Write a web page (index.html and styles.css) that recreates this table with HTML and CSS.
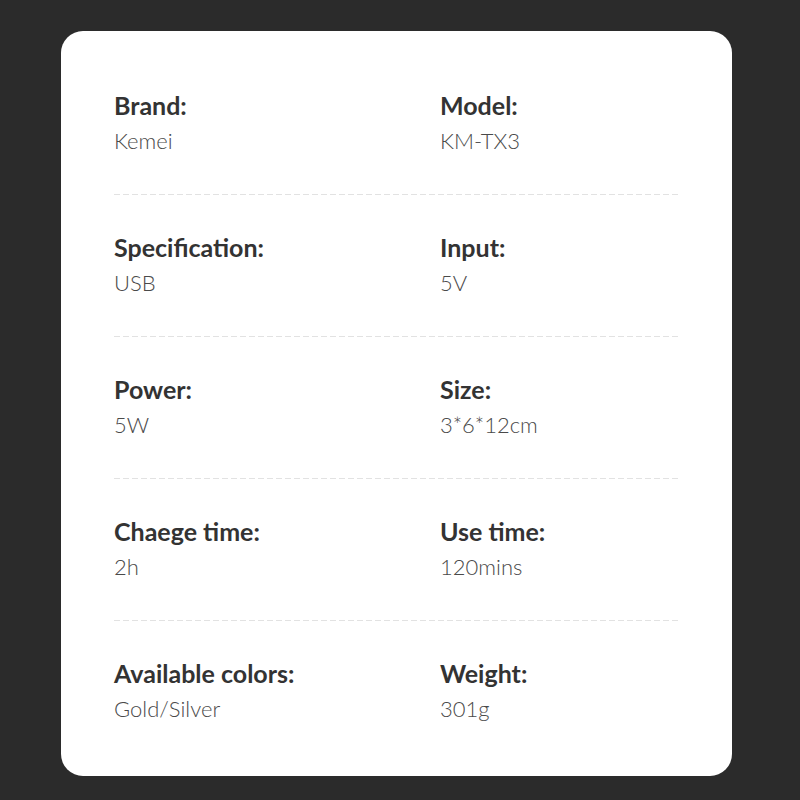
FILE: index.html
```html
<!DOCTYPE html>
<html>
<head>
<meta charset="utf-8">
<link rel="stylesheet" href="styles.css">
</head>
<body>
<div class="card">
  <div class="row">
    <div class="cell"><div class="label">Brand:</div><div class="value">Kemei</div></div>
    <div class="cell"><div class="label">Model:</div><div class="value">KM-TX3</div></div>
  </div>
  <div class="sep"></div>
  <div class="row">
    <div class="cell"><div class="label">Specification:</div><div class="value">USB</div></div>
    <div class="cell"><div class="label">Input:</div><div class="value">5V</div></div>
  </div>
  <div class="sep"></div>
  <div class="row">
    <div class="cell"><div class="label">Power:</div><div class="value">5W</div></div>
    <div class="cell"><div class="label">Size:</div><div class="value">3*6*12cm</div></div>
  </div>
  <div class="sep"></div>
  <div class="row">
    <div class="cell"><div class="label">Chaege time:</div><div class="value">2h</div></div>
    <div class="cell"><div class="label">Use time:</div><div class="value">120mins</div></div>
  </div>
  <div class="sep"></div>
  <div class="row">
    <div class="cell"><div class="label">Available colors:</div><div class="value">Gold/Silver</div></div>
    <div class="cell"><div class="label">Weight:</div><div class="value">301g</div></div>
  </div>
</div>
</body>
</html>
```
FILE: styles.css
```css
html, body {
  margin: 0;
  padding: 0;
  background: #2b2b2b;
  width: 800px;
  height: 800px;
  overflow: hidden;
}
body {
  padding-top: 31px;
  padding-left: 61px;
  box-sizing: border-box;
  font-family: Lato, "Open Sans", sans-serif;
}
.card {
  width: 671px;
  height: 745px;
  box-sizing: border-box;
  background: #ffffff;
  border-radius: 22px;
  padding: 57px 54px 0 53px;
}
.row {
  display: grid;
  grid-template-columns: 326px 1fr;
}
.label {
  font-size: 25px;
  line-height: 35px;
  font-weight: 700;
  color: #333333;
}
.value {
  font-size: 22px;
  line-height: 35px;
  font-weight: 300;
  color: #4a4a4a;
}
.sep {
  height: 1px;
  margin: 36px 0 35px;
  background: repeating-linear-gradient(to right, #e2e2e2 0 6px, transparent 6px 9px);
}
```
